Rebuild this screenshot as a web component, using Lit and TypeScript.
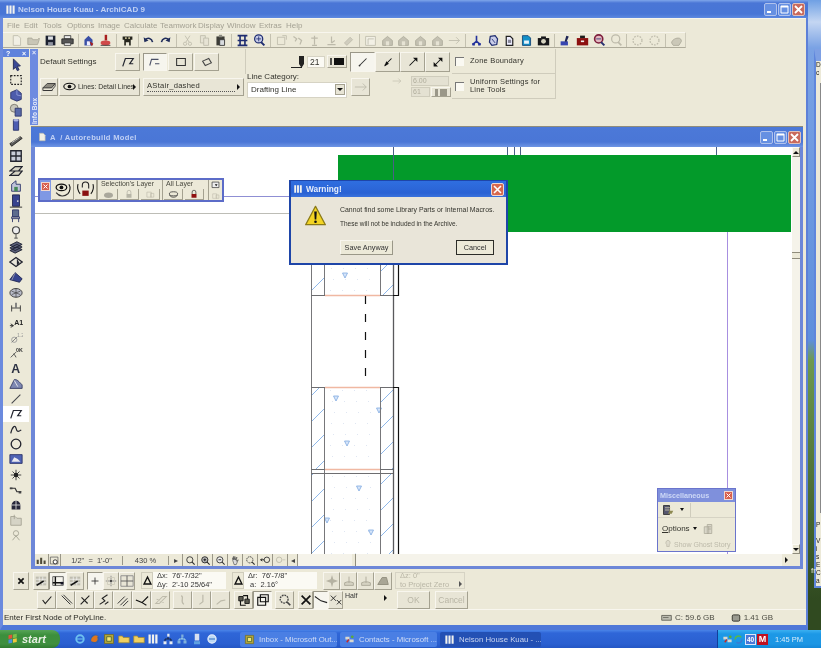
/**
 * ArchiCAD 9 main window on an XP desktop, with a warning dialog on top
 */

import { LitElement, css, html, svg } from "lit";
import { customElement } from "lit/decorators.js";

const DARK = "#23252f";
const BLUE = "#3a4fa6";
const RED = "#a81f1f";
const OFF = "#bdbaaa";

// Small line and shape icons, all on a 16x16 box
const ICONS: Record<string, unknown> = {
	page: svg`<path d="M4 2h6l3 3v9H4z" fill="#f1efe4" stroke="${OFF}"/>`,
	folder: svg`<path d="M1 13V5h5l1 2h6l2-2v2l-2 6z" fill="#c9c6b6" stroke="#a9a696"/>`,
	save: svg`<path d="M2 2h12v12H2z" fill="#1d2230"/><path d="M5 3h6v4H5z" fill="#dfe2e6"/><path d="M5 10h6v4H5z" fill="#8f93a0"/>`,
	print: svg`<path d="M4 2h8v4H4z" fill="#eee" stroke="#333"/><path d="M1 6h14v6H1z" fill="#555" stroke="#222"/><path d="M4 11h8v3H4z" fill="#eee" stroke="#333"/>`,
	doc: svg`<path d="M3 14V7l5-5 5 5v7z" fill="${BLUE}"/><path d="M6 9h4v5H6z" fill="#eef"/><path d="M9 9l5 3-2 3z" fill="${RED}"/>`,
	stamp: svg`<path d="M7 1h3v7H7z" fill="${RED}"/><ellipse cx="8" cy="11" rx="6" ry="3" fill="#d04a4a"/><path d="M2 14h12" stroke="#333"/>`,
	figure: svg`<path d="M2 3h12v4h-2v7h-2v-4H6v4H4V7H2z" fill="#26261e"/><path d="M5 4h2v2H5zM9 4h2v2H9z" fill="#c9c29a"/>`,
	undo: svg`<path d="M4 7c3-3 8-2 9 3" fill="none" stroke="#1f2c5a" stroke-width="2"/><path d="M2 4l1 6 5-2z" fill="#1f2c5a"/>`,
	redo: svg`<path d="M12 7C9 4 4 5 3 10" fill="none" stroke="#1f2c5a" stroke-width="2"/><path d="M14 4l-1 6-5-2z" fill="#1f2c5a"/>`,
	cut: svg`<path d="M5 2l5 8M11 2l-5 8" stroke="${OFF}" fill="none"/><circle cx="5" cy="12" r="2" fill="none" stroke="${OFF}"/><circle cx="11" cy="12" r="2" fill="none" stroke="${OFF}"/>`,
	copy: svg`<path d="M3 2h6v9H3z" fill="#e6e3d4" stroke="${OFF}"/><path d="M7 5h6v9H7z" fill="#e6e3d4" stroke="${OFF}"/>`,
	paste: svg`<path d="M3 3h10v11H3z" fill="#3c3c36"/><path d="M6 1h4v3H6z" fill="#8a8a80"/><path d="M7 7h6v7H7z" fill="#d9dcdf" stroke="#333"/>`,
	gridh: svg`<path d="M2 2h12M2 14h12M5 2v12M11 2v12M2 8h12" stroke="#1e2c70" stroke-width="2" fill="none"/>`,
	search: svg`<circle cx="7" cy="6" r="5" fill="#c7cce8" stroke="#1e2c70" stroke-width="1.5"/><path d="M4 6h6M7 3v6" stroke="#1e2c70"/><path d="M10 10l4 4" stroke="#1e2c70" stroke-width="2.5"/>`,
	off1: svg`<path d="M3 4h9v9H3z" fill="none" stroke="${OFF}"/><path d="M9 2h5v5" fill="none" stroke="${OFF}"/>`,
	off2: svg`<path d="M3 3l4 3-2 3M9 5l4 3-2 5" fill="none" stroke="${OFF}" stroke-width="1.5"/>`,
	off3: svg`<path d="M8 2v11M4 5h8M5 14h6" fill="none" stroke="${OFF}" stroke-width="1.5"/>`,
	off4: svg`<path d="M8 3v8M3 13h10M8 11l4-3" fill="none" stroke="${OFF}" stroke-width="1.5"/>`,
	off5: svg`<path d="M3 11l7-7 3 3-7 7z" fill="#d0cdbe" stroke="${OFF}"/>`,
	off6: svg`<path d="M2 3h12v11H2z" fill="#f2f0e5" stroke="${OFF}"/><path d="M5 6h7M5 6v7" stroke="${OFF}" fill="none"/>`,
	house: svg`<path d="M2 8l6-5 6 5v6H2z" fill="#c4c1b2" stroke="#aaa797"/><path d="M6 9h4v5H6z" fill="#e6e3d4"/>`,
	jack: svg`<path d="M8 2v9M3 13l5-4 5 4" stroke="#24339c" stroke-width="2" fill="none"/><path d="M3 11h3v3H3zM10 11h3v3h-3z" fill="#24339c"/>`,
	cube1: svg`<path d="M4 3l6-1 3 4-1 7-6 1-3-4z" fill="#c9cde8" stroke="#1e2c70" stroke-width="1.5"/><path d="M6 6l4 5" stroke="#1e2c70"/>`,
	cube2: svg`<path d="M4 3h5l3 3v8H4z" fill="#eef" stroke="#222" stroke-width="1.5"/><path d="M6 7h4v4H6z" fill="#889"/>`,
	cube3: svg`<path d="M3 2h7l3 3v9H3z" fill="#1490c8" stroke="#0d3d70"/><path d="M5 8h6v4H5z" fill="#e8f4fa"/>`,
	camera: svg`<path d="M1 5h14v9H1z" fill="#17171a"/><path d="M5 3h6v2H5z" fill="#17171a"/><circle cx="8" cy="9" r="3" fill="#d6d3c0"/>`,
	cad: svg`<path d="M2 9h9v5H2z" fill="#3846b0"/><path d="M9 2l3 1-3 7-2-1z" fill="#1d2454"/>`,
	redbox: svg`<path d="M1 5h14v9H1z" fill="#8c1010"/><path d="M5 2h6v3H5z" fill="#1d1d1d"/><path d="M6 8h4v2H6z" fill="#eee"/>`,
	lens: svg`<circle cx="7" cy="6" r="5" fill="#e3b8c0" stroke="#7d1e3c" stroke-width="2"/><path d="M4 6h6" stroke="#283070"/><path d="M10 10l4 4" stroke="#283070" stroke-width="2.5"/>`,
	lensoff: svg`<circle cx="7" cy="6" r="5" fill="none" stroke="${OFF}" stroke-width="1.5"/><path d="M10 10l4 4" stroke="${OFF}" stroke-width="2"/>`,
	dots: svg`<circle cx="8" cy="8" r="5.5" fill="none" stroke="${OFF}" stroke-dasharray="2 1.5" stroke-width="1.5"/>`,
	cloud: svg`<path d="M2 11c0-3 4-6 8-6 3 0 4 2 4 4l-3 5H4z" fill="#cbc8b8" stroke="#aaa797"/>`,
	polyline: svg`<path d="M2 13L5 4h9L10 10h4" fill="none" stroke="${DARK}" stroke-width="1.4"/>`,
	poly2: svg`<path d="M2 12l2-7h8M8 10h5" fill="none" stroke="#4a4f66" stroke-width="1.2"/>`,
	rect: svg`<path d="M3 4h10v8H3z" fill="none" stroke="#333" stroke-width="1.2"/>`,
	rot: svg`<path d="M3 7l7-3 3 5-7 3z" fill="none" stroke="#444" stroke-width="1.2"/>`,
	stack: svg`<path d="M1 9l5-5h9l-4 5z" fill="#8d8a80" stroke="#333"/><path d="M1 9v3h10l4-5V4" fill="none" stroke="#333"/><path d="M2 12h10" stroke="#333"/>`,
	eye: svg`<ellipse cx="8" cy="8" rx="7" ry="4" fill="none" stroke="#111" stroke-width="1.4"/><circle cx="8" cy="8" r="2.3" fill="#111"/>`,
	line: svg`<path d="M4 12L12 4" stroke="#333" stroke-width="1.2"/><circle cx="4" cy="12" r="1" fill="#333"/>`,
	lineb: svg`<path d="M4 12L12 4" stroke="#111" stroke-width="1.2"/><path d="M6 7l3 3-5 3z" fill="#111"/>`,
	linec: svg`<path d="M4 12L12 4" stroke="#111" stroke-width="1.2"/><path d="M8 3h5v5z" fill="#111"/>`,
	lined: svg`<path d="M4 12L12 4" stroke="#111" stroke-width="1.2"/><path d="M8 3h5v5zM3 8v5h5z" fill="#111"/>`,
	arrowoff: svg`<path d="M1 8h13M10 4l4 4-4 4" fill="none" stroke="${OFF}"/>`,
	// toolbox
	pointer: svg`<path d="M5 1l8 8-3.500 .5 2 4-2 1-2-4L5 13z" fill="#3a4896" stroke="#1e2450"/>`,
	marquee: svg`<path d="M2 3h12v10H2z" fill="none" stroke="#222" stroke-dasharray="2 1.500" stroke-width="1.300"/>`,
	slab: svg`<path d="M2 5l7-3 5 4v7l-5 2-7-3z" fill="#4d5cac" stroke="#2a3268"/><path d="M9 2v6l5 1" stroke="#8e9ad8" fill="none"/>`,
	morph: svg`<circle cx="6" cy="6" r="4.500" fill="#c7c5ba" stroke="#77756a"/><path d="M7 6h7v9H7z" fill="#5869a8" stroke="#2a3268"/>`,
	column: svg`<path d="M5 2h6v12H5z" fill="#4c5cb2" stroke="#2a3268"/><ellipse cx="8" cy="2.500" rx="3" ry="1.500" fill="#aab2e0"/>`,
	beam: svg`<path d="M1 11L13 3l2 2L3 14z" fill="#5a5a58" stroke="#222"/><path d="M3 10l9-6" stroke="#ccc"/>`,
	window: svg`<path d="M2 2h12v12H2z" fill="#c8ccd8" stroke="#22242e" stroke-width="1.500"/><path d="M8 2v12M2 8h12" stroke="#22242e" stroke-width="1.500"/>`,
	stair: svg`<path d="M1 8l6-5h8l-4 5zM1 13l6-5h8l-4 5z" fill="#d7d4c4" stroke="#22242e" stroke-width="1.400"/>`,
	wallup: svg`<path d="M3 14V6l5-4v4h5v8z" fill="#c0c4d8" stroke="#2a3268"/><path d="M6 9h4v5H6z" fill="#485"/>`,
	door: svg`<path d="M4 1h8v13H4z" fill="#37438e" stroke="#20264e"/><path d="M1 15h14" stroke="#222"/><circle cx="10" cy="8" r="1" fill="#ddd"/>`,
	chair: svg`<path d="M4 1h7v8H4z" fill="#5d6c8e" stroke="#2a3268"/><path d="M3 9h9v2H3zM4 11v4M11 11v4" stroke="#2a3268" fill="none"/>`,
	lamp: svg`<circle cx="8" cy="6" r="4" fill="#eee" stroke="#444" stroke-width="1.400"/><path d="M8 10v5M6 15h4" stroke="#444"/>`,
	layers: svg`<path d="M1 6l8-4 6 3-8 4zM1 9l8-4 6 3-8 4zM1 12l8-4 6 3-8 4z" fill="#5a5f78" stroke="#1c1f30"/>`,
	slab2: svg`<path d="M1 8l7-5 7 5-7 5z" fill="#e8e6da" stroke="#22242e" stroke-width="1.400"/><path d="M9 4l3 5-3 3" fill="#22242e"/>`,
	roof: svg`<path d="M1 11L7 3l8 7-3 4z" fill="#36448e" stroke="#1e2450"/><path d="M7 3L3 12" stroke="#99a"/>`,
	mesh: svg`<ellipse cx="8" cy="9" rx="7" ry="5" fill="#b9bcc8" stroke="#333"/><path d="M3 7l10 4M3 11l10-4M8 4v10" stroke="#333" stroke-width=".7"/>`,
	dim: svg`<path d="M3 8h10M3 5v7M13 5v7" stroke="#333" fill="none"/><path d="M7 2h2v6H7z" fill="#777"/>`,
	dimtext: svg`<path d="M1 11h4M2 9l3 2-3 2" stroke="#222" fill="none"/><text x="6" y="10" font-size="8" font-weight="700" font-family="Liberation Sans" fill="#222">A1</text>`,
	level: svg`<circle cx="6" cy="10" r="3" fill="none" stroke="#999"/><path d="M3 13l6-6" stroke="#777"/><text x="9" y="7" font-size="6" font-family="Liberation Sans" fill="#999">1.2</text>`,
	angle: svg`<path d="M2 13l6-6M8 13a6 6 0 0 0-3-4" stroke="#444" fill="none"/><text x="8" y="7" font-size="6" font-weight="700" font-family="Liberation Sans" fill="#333">0K</text>`,
	bigA: svg`<text x="2.500" y="14" font-size="14" font-weight="700" font-family="Liberation Sans" fill="#2c3142">A</text>`,
	fill: svg`<path d="M1 13l5-10c3-1 6 3 9 6v4z" fill="#7e88b2" stroke="#333a62"/><path d="M6 4l4 7" stroke="#eee"/>`,
	slash: svg`<path d="M3 13L13 3" stroke="#45464c" stroke-width="1.200"/>`,
	spline: svg`<path d="M2 13c2-8 5-10 6-6s2 5 6 2" fill="none" stroke="#22242e" stroke-width="1.400"/>`,
	circle: svg`<circle cx="8" cy="8" r="5.500" fill="none" stroke="#22242e" stroke-width="1.500"/>`,
	pic: svg`<path d="M1 3h14v10H1z" fill="#4f63b4" stroke="#2a3268"/><path d="M3 11l3-5 4 2 3 3z" fill="#e9e9f0"/>`,
	sun: svg`<path d="M8 2v12M2 8h12M4 4l8 8M12 4l-8 8" stroke="#333"/><circle cx="8" cy="8" r="2.500" fill="#222"/>`,
	conn: svg`<path d="M1 6h6l2 4h5" fill="none" stroke="#333" stroke-width="1.400"/><path d="M1 5h3v2H1zM11 9h3v3h-3z" fill="#444"/>`,
	halfwall: svg`<path d="M3 8a5 5 0 0 1 10 0v5H3z" fill="#26263a"/><path d="M8 3v10M3 8h10" stroke="#ddd"/>`,
	box3: svg`<path d="M2 4h5l2 2h5v8H2z" fill="#d6d4c6" stroke="#a5a394"/><path d="M6 2v5" stroke="#a5a394"/>`,
	ghost: svg`<circle cx="8" cy="6" r="3" fill="none" stroke="#a5a394"/><path d="M4 14l4-5 4 5" fill="none" stroke="#a5a394"/>`,
	// coordinates and guides
	cross: svg`<path d="M5 5l6 6M11 5l-6 6" stroke="#111" stroke-width="2"/>`,
	grid2: svg`<path d="M2 3h12v10H2z" fill="#bfbdb0"/><path d="M2 6h12M2 10h12M6 3v10M10 3v10" stroke="#fff" stroke-width=".7"/><path d="M3 13l8-5" stroke="#111" stroke-width="1.800"/>`,
	grid3: svg`<path d="M2 3h12v10H2z" fill="none" stroke="#555"/><path d="M5 3v10M2 10h12" stroke="#111" stroke-width="1.600"/><path d="M11 9h3v3h-3z" fill="#112"/>`,
	plus: svg`<path d="M8 4v8M4 8h8" stroke="#333"/>`,
	plusgrid: svg`<path d="M8 2v12M2 8h12" stroke="#888"/><path d="M4 4h8v8H4z" fill="none" stroke="#cfccbc"/><circle cx="8" cy="8" r="1.200" fill="#333"/>`,
	plusbox: svg`<path d="M1 2h14v12H1z" fill="none" stroke="#888"/><path d="M8 2v12M1 8h14" stroke="#555"/>`,
	tri: svg`<path d="M8 3l5 10H3z" fill="none" stroke="#111" stroke-width="2"/>`,
	cursor1: svg`<path d="M3 8l3 4 7-8" fill="none" stroke="#222" stroke-width="1.300"/>`,
	cursor2: svg`<path d="M3 3l10 10M5 2l10 10" fill="none" stroke="#333" stroke-width="1.100"/>`,
	cursor3: svg`<path d="M3 13L13 3M4 5l7 7" fill="none" stroke="#222" stroke-width="1.300"/>`,
	cursor4: svg`<path d="M3 13l6-4-3-3 6-4M9 13l4-3" fill="none" stroke="#222" stroke-width="1.300"/>`,
	cursor5: svg`<path d="M2 12l8-8M5 14l8-8M8 15l6-6" fill="none" stroke="#333" stroke-width="1.100"/>`,
	cursor6: svg`<path d="M1 8l7 3 7-7M8 11l5 3" fill="none" stroke="#111" stroke-width="1.300"/>`,
	cursor7: svg`<path d="M2 12l8-8h4l-8 8zM3 7l8 4" fill="none" stroke="${OFF}" stroke-width="1.200"/>`,
	curve1: svg`<path d="M6 3c4 2-2 6 3 10" fill="none" stroke="${OFF}" stroke-width="1.400"/>`,
	curve2: svg`<path d="M9 2v8l-4 3" fill="none" stroke="${OFF}" stroke-width="1.400"/>`,
	curve3: svg`<path d="M3 13l5-4 5-1" fill="none" stroke="${OFF}" stroke-width="1.400"/>`,
	cogs: svg`<path d="M2 4h5v5H2zM9 7h5v5H9z" fill="#5a5a50" stroke="#111"/><path d="M4 9v5h6M7 3h5v4" fill="none" stroke="#111" stroke-width="1.300"/>`,
	planbox: svg`<path d="M2 5h9v9H2z" fill="none" stroke="#111" stroke-width="1.300"/><path d="M5 2h9v8H5z" fill="none" stroke="#111" stroke-width="1.300"/>`,
	lensg: svg`<circle cx="7" cy="7" r="4.500" fill="none" stroke="#444" stroke-dasharray="2 1" stroke-width="1.500"/><path d="M10 10l4 4" stroke="#444" stroke-width="2"/>`,
	bigx: svg`<path d="M3 3l10 10M13 3L3 13" stroke="#111" stroke-width="2"/>`,
	slope: svg`<path d="M1 4l7 5 7 2" fill="none" stroke="#222" stroke-width="1.200"/>`,
	xs: svg`<path d="M2 3l6 6M8 3L2 9M9 8l5 5M14 8l-5 5" stroke="#222"/>`,
	down1: svg`<path d="M8 3v7M3 13h10v-3l-3-1H6l-3 1z" fill="#d5d2c2" stroke="#aaa797"/>`,
	roof2: svg`<path d="M2 12l5-8h5l2 8z" fill="#a9a696" stroke="#8f8c7c"/>`,
	burst: svg`<path d="M8 1l1.500 5L15 8l-5.500 2L8 15l-1.500-5L1 8l5.500-2z" fill="#b5b2a2"/>`,
	// view bar
	trio: svg`<path d="M1 13V7h3v6zM6 13V4h3v9zM11 13V8h3v5z" fill="#4e4a38"/>`,
	mag: svg`<path d="M2 3h11v10H2z" fill="none" stroke="#555"/><circle cx="9" cy="10" r="3" fill="#fff" stroke="#111" stroke-width="1.200"/>`,
	zoomn: svg`<circle cx="7" cy="7" r="4.500" fill="none" stroke="#333" stroke-width="1.300"/><path d="M10 10l4 4" stroke="#333" stroke-width="1.800"/>`,
	zoomi: svg`<circle cx="7" cy="7" r="4.500" fill="#bbb" stroke="#222" stroke-width="1.300"/><path d="M5 7h4M7 5v4M10 10l4 4" stroke="#222" stroke-width="1.500"/>`,
	zoomo: svg`<circle cx="7" cy="7" r="4.500" fill="#eee" stroke="#333" stroke-width="1.300"/><path d="M5 7h4M10 10l4 4" stroke="#333" stroke-width="1.500"/>`,
	hand: svg`<path d="M4 8V4l1 3V2l2 5V2l1 5 2-4-1 6 3-2-3 7H6z" fill="#ddd" stroke="#333" stroke-width=".800"/>`,
	zoomr: svg`<circle cx="7" cy="7" r="4.500" fill="none" stroke="#333" stroke-dasharray="2 1" stroke-width="1.300"/><path d="M10 10l4 4" stroke="#333" stroke-width="1.800"/>`,
	back: svg`<circle cx="10" cy="7" r="4" fill="none" stroke="#333" stroke-width="1.300"/><path d="M1 7h5M3 5L1 7l2 2" stroke="#111" fill="none" stroke-width="1.300"/>`,
	nextoff: svg`<circle cx="6" cy="7" r="4" fill="none" stroke="${OFF}" stroke-width="1.300"/><path d="M11 7h4" stroke="${OFF}"/>`,
	// palette eyes and locks
	eyearrow: svg`<path d="M2 11c3 4 8 4 11 1" fill="none" stroke="#333"/><ellipse cx="7" cy="6" rx="5" ry="3" fill="none" stroke="#111" stroke-width="1.200"/><circle cx="7" cy="6" r="1.800" fill="#111"/><path d="M14 3c2 3 1 7-1 9" fill="none" stroke="#111"/>`,
	lockarrow: svg`<path d="M5 6V4a3 3 0 0 1 6 0v3" fill="none" stroke="#222"/><path d="M5 9h6v5H5z" fill="#8a1010"/><path d="M1 3c-1 3 0 7 2 9M15 3c1 3 0 7-2 9" fill="none" stroke="#111"/>`,
	dish: svg`<ellipse cx="8" cy="9" rx="6.500" ry="4" fill="#aaa89c"/>`,
	dishd: svg`<ellipse cx="8" cy="7" rx="6" ry="3" fill="none" stroke="#3a3a3a" stroke-width="1.200"/><path d="M2 9c3 4 9 4 12 0" fill="none" stroke="#222"/>`,
	lockg: svg`<path d="M5 8V5a3 3 0 0 1 6 0v3" fill="none" stroke="#aaa89c"/><path d="M4 8h8v6H4z" fill="#b7b5a7"/>`,
	lockr: svg`<path d="M5 8V5a3 3 0 0 1 6 0v3" fill="none" stroke="#222"/><path d="M4 8h8v6H4z" fill="#8f1010"/>`,
	boxd: svg`<path d="M3 5h7v8H3zM9 7h5v6H9z" fill="none" stroke="#bdbaaa"/>`,
	dropd: svg`<path d="M3 3h10v8H3z" fill="#eee" stroke="#333"/><path d="M7 6h4l-2 3z" fill="#111"/>`,
	misc: svg`<path d="M2 2h8v12H2z" fill="#55566e" stroke="#222"/><path d="M4 5h8M4 8h8" stroke="#ded8b4"/><path d="M10 9h5l-2 4h-5z" fill="#8e8a52"/>`,
	miscoff: svg`<path d="M3 5h6v9H3zM7 2h6v12H7z" fill="#d9d6c8" stroke="#aaa797"/><path d="M8 5h4M8 8h4" stroke="#aaa797"/>`,
	ghostb: svg`<path d="M8 2a4 4 0 0 0-2 7v3h4V9a4 4 0 0 0-2-7z" fill="#dedbcc" stroke="#b5b2a2"/>`,
	// taskbar
	ie: svg`<circle cx="8" cy="8" r="5" fill="none" stroke="#6cc0f0" stroke-width="2.500"/><path d="M3 8h10" stroke="#6cc0f0" stroke-width="1.500"/>`,
	fox: svg`<circle cx="8" cy="8" r="6" fill="#2f5fb0"/><path d="M3 11c-1-6 6-10 10-6-2-1-2 0-2 1 2 4-2 8-8 5z" fill="#e0761c"/>`,
	outlook: svg`<path d="M2 2h12v12H2z" fill="#b3a53a" stroke="#736c20"/><path d="M5 5h6v6H5z" fill="#f5e87a" stroke="#3b5a2a"/>`,
	yfolder: svg`<path d="M1 13V4h5l1 2h8v7z" fill="#f0d060" stroke="#a08a30"/>`,
	bars: svg`<path d="M2 2h3v12H2zM6.500 2h3v12h-3zM11 2h3v12h-3z" fill="#f2f2ee"/>`,
	net: svg`<path d="M7 1h3v4H7zM2 11h4v4H2zM10 11h4v4h-4z" fill="#e8ecf2"/><path d="M8 5v3M4 11V8h8v3" stroke="#111" fill="none"/>`,
	net2: svg`<path d="M7 2h3v4H7zM2 10h4v4H2zM10 10h4v4h-4z" fill="#7fb0dc"/><path d="M8 6v2M4 10V8h8v2" stroke="#cfe" fill="none"/>`,
	msn: svg`<path d="M5 1h6v9H5z" fill="#d8e0f0"/><path d="M4 11h8v4H4z" fill="#5fa0e0"/>`,
	ie2: svg`<circle cx="8" cy="8" r="5.500" fill="#bcd8f4" stroke="#e8f0fc" stroke-width="1.500"/><path d="M4 8h8" stroke="#3c78c8" stroke-width="1.500"/>`,
	sat: svg`<path d="M2 4h6v4H2zM8 8h6v4H8z" fill="#d8d8d0"/><path d="M4 12l3-4" stroke="#c62828" stroke-width="2"/><circle cx="12" cy="4" r="2" fill="#5caa38"/>`,
	sync: svg`<path d="M3 8a5 5 0 0 1 9-3" fill="none" stroke="#58b848" stroke-width="2"/><path d="M13 8a5 5 0 0 1-8 4" fill="none" stroke="#3e78d0" stroke-width="2"/>`,
	disk: svg`<path d="M1 5h14v7H1z" fill="#bcbcb0" stroke="#44443c"/><path d="M3 8h8" stroke="#55554c"/>`,
	chip: svg`<path d="M4 3h8a2 2 0 0 1 2 2v6a2 2 0 0 1-2 2H4a2 2 0 0 1-2-2V5a2 2 0 0 1 2-2z" fill="#9a9a90" stroke="#33332c" stroke-width="1.500"/>`,
	flag: svg`<path d="M2 3l5-1v5l-5 1z" fill="#e2563a"/><path d="M8 2l5-1v5l-5 1z" fill="#7cc04a"/><path d="M2 9l5-1v5l-5 1z" fill="#4a90e0"/><path d="M8 8l5-1v5l-5 1z" fill="#f0c83a"/>`,
	warn: svg`<path d="M8 1L15.500 15H.5z" fill="#f3d424" stroke="#8a7a18" stroke-linejoin="round"/><path d="M7 5h2l-.4 6H7.400z" fill="#111"/><circle cx="8" cy="12.800" r="1" fill="#111"/>`,
};

const icon = (name: string, size = 14) =>
	html`<svg class="ic" width=${size} height=${size} viewBox="0 0 16 16">${ICONS[name]}</svg>`;

const MENUS: [string, number][] = [
	["File", 17], ["Edit", 19], ["Tools", 24], ["Options", 31], ["Image", 26], ["Calculate", 36],
	["Teamwork", 38], ["Display", 29], ["Window", 32], ["Extras", 27], ["Help", 20],
];

// "|" marks a toolbar separator
const TOOLS = "page folder save print | doc stamp | figure | undo redo | cut copy paste | gridh search | off1 off2 off3 off4 off5 | off6 house house house house arrowoff | jack cube1 cube2 cube3 camera | cad redbox lens lensoff | dots dots | cloud".split(" ");

const TOOLBOX = "pointer marquee slab morph column beam window stair wallup door chair lamp layers slab2 roof mesh dim dimtext level angle bigA fill slash polyline spline circle pic sun conn halfwall box3 ghost".split(" ");

const VIEW_ICONS = "zoomi zoomo hand zoomr back nextoff".split(" ");

const ROW2A = "cursor1 cursor2 cursor3 cursor4 cursor5 cursor6".split(" ");

const QUICK = "ie fox outlook yfolder yfolder bars net net2 msn ie2".split(" ");

const TRIANGLES: [number, number][] = [[345, 275], [336, 398], [379, 410], [347, 443], [359, 488], [327, 520], [371, 532]];

@customElement("win-buttons")
export class WinButtons extends LitElement {
	static styles = css`
		:host { display: flex; gap: 1px; }
		.b {
			width: 13px;
			height: 13px;
			border-radius: 2px;
			border: 1px solid #b0c2ec;
			background: #6690e2;
			box-sizing: border-box;
			display: flex;
			align-items: center;
			justify-content: center;
		}
		.close { background: #c96a5c; border-color: #e0c0ba; }
		svg { display: block; }
	`;
	render() {
		return html`
			<div class="b"><svg width="9" height="9" viewBox="0 0 9 9"><path d="M1 6h4v2H1z" fill="#fff"/></svg></div>
			<div class="b"><svg width="9" height="9" viewBox="0 0 9 9"><path d="M1 1h7v7H1z" fill="none" stroke="#fff"/><path d="M1 1h7v1.500H1z" fill="#fff"/></svg></div>
			<div class="b close"><svg width="9" height="9" viewBox="0 0 9 9"><path d="M1 1l7 7M8 1L1 8" stroke="#fff" stroke-width="1.800"/></svg></div>
		`;
	}
}

@customElement("app-root")
export class AppRoot extends LitElement {
	static styles = css`
		:host {
			display: block;
			position: relative;
			width: 821px;
			height: 648px;
			overflow: hidden;
			font-family: "Liberation Sans", Arial, sans-serif;
			font-size: 8px;
			color: #33332c;
			background: linear-gradient(#6fa0e4 0, #c4d6f2 22px, #7aa2e4 48px, #5f8fdc 340px, #6f9a4e 360px, #304a20 600px);
			filter: blur(0.45px);
		}
		svg { display: block; flex: none; }
		.ic { display: block; }

		/* hidden window peeking out behind the main one */
		.behind {
			position: absolute;
			left: 814px;
			top: 49px;
			width: 60px;
			height: 539px;
			background: #ece9d8;
			border: 2px solid #5f86dc;
			border-top: 12px solid #7ea0e4;
			box-sizing: border-box;
			font-size: 6.500px;
			line-height: 8px;
			color: #222;
		}
		.behind div { height: 8px; }
		.behind .well { height: 430px; margin: 6px 0 8px 4px; border-left: 1px solid #888; background: #f4f2e8; }
		.peek { position: absolute; left: 811px; top: 566px; color: #e8e8e0; font-size: 8px; }

		.main {
			position: absolute;
			left: 0;
			top: 0;
			width: 808px;
			height: 630px;
			box-sizing: border-box;
			background: #ece9d8;
			border-left: 3px solid #6b8ade;
			border-right: 2px solid #5d80d8;
			border-bottom: 5px solid #4f78d8;
			display: flex;
			flex-direction: column;
		}
		.title {
			height: 18px;
			margin: 0 -2px 0 -3px;
			padding: 0 3px 0 5px;
			flex: none;
			display: flex;
			align-items: center;
			gap: 2px;
			background: linear-gradient(#7fa6ea 0, #4a76d6 3px, #4775d6 14px, #5d89e0 18px);
			color: #c0d0f4;
			font-size: 8px;
			font-weight: 700;
		}
		.title .grow { flex: 1; }
		.menu {
			height: 13px;
			flex: none;
			padding-left: 3px;
			display: flex;
			align-items: center;
			color: #a5a294;
			font-size: 8px;
			border-top: 1px solid #f6f4ea;
		}
		.menu span { flex: none; box-sizing: border-box; padding-left: 1px; }
		.tools {
			height: 16px;
			width: 683px;
			box-sizing: border-box;
			flex: none;
			padding-left: 5px;
			display: flex;
			align-items: center;
			border-bottom: 1px solid #aeab9a;
			border-top: 1px solid #f8f6ee;
			border-right: 1px solid #cfccbc;
		}
		.tools .t { width: 16.900px; display: flex; justify-content: center; flex: none; }
		.tools .sep { width: 4.700px; flex: none; height: 13px; background: linear-gradient(90deg, transparent 2px, #c4c1b0 2px, #c4c1b0 3px, transparent 3px); }

		.body { flex: 1; display: flex; min-height: 0; }
		.toolbox { width: 26px; flex: none; display: flex; flex-direction: column; padding-top: 1px; }
		.tb-head {
			height: 8px;
			background: #5f82dc;
			color: #fff;
			font-size: 7px;
			font-weight: 700;
			display: flex;
			justify-content: space-between;
			padding: 0 3px;
			align-items: center;
			flex: none;
		}
		.tb-list { flex: none; }
		.tb-item { height: 15.200px; display: flex; align-items: center; justify-content: center; }
		.tb-item.on { background: #fff; }

		.right { flex: 1; display: flex; flex-direction: column; min-width: 0; padding-left: 1px; }
		.info { height: 77px; flex: none; display: flex; padding-top: 1px; box-sizing: border-box; }
		.strip {
			width: 8px;
			flex: none;
			background: #6d8be0;
			color: #e4eafb;
			display: flex;
			flex-direction: column;
			align-items: center;
			justify-content: space-between;
			font-weight: 700;
			font-size: 7px;
		}
		.strip .v { writing-mode: vertical-rl; transform: rotate(180deg); font-size: 6.500px; white-space: nowrap; padding-top: 1px; }
		.rows { flex: 1; min-width: 0; }
		.row { display: flex; align-items: center; height: 25px; }
		.sp { flex: none; }
		.lab { flex: none; font-size: 8px; white-space: nowrap; }
		.btn {
			flex: none;
			box-sizing: border-box;
			display: flex;
			align-items: center;
			justify-content: center;
			border-right: 1px solid #a4a190;
			border-bottom: 1px solid #a4a190;
			border-top: 1px solid #f8f6ee;
			border-left: 1px solid #f8f6ee;
			background: #e8e5d6;
		}
		.btn.on { background: #f6f5ee; border-color: #9a9788 #f8f6ee #f8f6ee #9a9788; }
		.num { flex: none; box-sizing: border-box; background: #fbfaf4; border: 1px solid #d6d3c4; font-size: 8.500px; padding-left: 2px; line-height: 10px; height: 12px; }
		.lines-btn { gap: 2px; justify-content: flex-start; padding-left: 3px; font-size: 7.600px; position: relative; white-space: nowrap; }
		.lines-btn .small { font-size: 6.900px; }
		.tip { position: absolute; right: 3px; top: 5px; width: 0; height: 0; border-left: 3px solid #111; border-top: 3px solid transparent; border-bottom: 3px solid transparent; }
		.dash { position: absolute; left: 3px; right: 8px; bottom: 3px; border-bottom: 1px dotted #555; }
		.cat { flex: none; display: flex; flex-direction: column; gap: 1px; font-size: 8px; }
		.select { height: 14px; background: #fff; display: flex; align-items: center; justify-content: space-between; padding: 0 1px 0 3px; border: 1px solid #d6d3c4; }
		.drop { width: 10px; height: 11px; background: #e8e5d6; border: 1px solid #a4a190; box-sizing: border-box; display: flex; align-items: center; justify-content: center; }
		.drop::after { content: ""; border-top: 3px solid #111; border-left: 3px solid transparent; border-right: 3px solid transparent; }
		.check { width: 9px; height: 9px; flex: none; box-sizing: border-box; background: #faf9f2; border-left: 1px solid #777; border-top: 1px solid #777; }
		.boxed { flex: none; width: 104px; height: 100%; box-sizing: border-box; border-right: 1px solid #cfccbc; border-bottom: 1px solid #cfccbc; display: flex; align-items: center; gap: 3px; padding-left: 3px; font-size: 7.500px; line-height: 8.500px; letter-spacing: 0.2px; }
		.divider { width: 1px; height: 100%; background: #cfccbc; flex: none; }
		.off-block { flex: none; display: flex; flex-direction: column; gap: 1px; color: #b0ad9c; }
		.off-row { display: flex; align-items: center; gap: 1px; }
		.off-num { width: 38px; height: 10px; box-sizing: border-box; background: #e4e1d2; border: 1px solid #cfccbc; font-size: 7px; line-height: 8px; padding-left: 1px; }

		.doc {
			flex: 1;
			margin: 2px 3px 1px 1px;
			min-height: 0;
			display: flex;
			flex-direction: column;
			border: 4px solid #6d87d8;
			border-top: 0;
			border-bottom-width: 3px;
			border-right-width: 3px;
			box-shadow: 0 -1px 0 #8f8c7c;
		}
		.doc-title {
			height: 20px;
			margin: 0 -3px 0 -4px;
			padding: 0 2px 0 6px;
			flex: none;
			display: flex;
			align-items: center;
			gap: 3px;
			background: linear-gradient(#4c79d8, #4a76d6 15px, #6f95e4);
			color: #c0d0f4;
			font-size: 7.600px;
			font-weight: 700;
			letter-spacing: 0.3px;
		}
		.doc-title .grow { flex: 1; }
		.doc-main { flex: 1; display: flex; min-height: 0; }
		.canvas { flex: none; background: #fff; }
		.vbar { flex: 1; background: #f5f3ea; display: flex; flex-direction: column; position: relative; }
		.arrow { height: 10px; display: flex; align-items: center; justify-content: center; border: 1px solid; border-color: #fbfaf4 #8f8c7c #8f8c7c #fbfaf4; background: #ece9d8; flex: none; box-sizing: border-box; }
		.arrow::after { content: ""; border-left: 3px solid transparent; border-right: 3px solid transparent; }
		.arrow.up::after { border-bottom: 3px solid #111; }
		.arrow.dn::after { border-top: 3px solid #111; }
		.thumb { height: 5px; margin-top: 95px; border-top: 1px solid #8f8c7c; border-bottom: 1px solid #8f8c7c; background: #ece9d8; flex: none; }
		.vfill { flex: 1; }
		.viewbar { height: 12px; flex: none; display: flex; align-items: center; background: #ece9d8; font-size: 7.500px; color: #444; }
		.viewbar .cell { flex: none; display: flex; align-items: center; justify-content: center; height: 100%; border-right: 1px solid #9a9788; box-sizing: border-box; }
		.viewbar .txt { flex: none; text-align: center; box-sizing: border-box; }
		.hbar { flex: 1; height: 100%; background: #f5f3ea; position: relative; display: flex; justify-content: flex-end; }
		.hthumb { position: absolute; left: 54px; top: 0; width: 3px; height: 100%; background: #ece9d8; border-right: 1px solid #8f8c7c; }
		.grip { width: 18px; height: 100%; background: #ece9d8; display: flex; align-items: center; flex: none; }
		.grip::before { content: ""; border-left: 3px solid #111; border-top: 3px solid transparent; border-bottom: 3px solid transparent; margin-left: 3px; }

		.coords { flex: none; height: 39px; padding-top: 1px; box-sizing: border-box; }
		.crow { display: flex; align-items: center; height: 19px; }
		.field { flex: none; background: #fbfaf4; height: 17px; display: flex; flex-direction: column; justify-content: center; font-size: 7.500px; line-height: 8.500px; padding-left: 4px; box-sizing: border-box; color: #333; }
		.field.off { background: #ece9d8; color: #b9b6a6; position: relative; border: 1px solid #d6d3c4; }
		.smallb { flex: none; height: 17px; width: 12px; box-sizing: border-box; border: 1px solid #cfccbc; display: flex; align-items: center; justify-content: center; }
		.text-off { color: #b9b6a6; font-size: 8.500px; }
		.half { flex: none; width: 45px; height: 17px; box-sizing: border-box; font-size: 7px; line-height: 8px; position: relative; padding-top: 1px; color: #333; }
		.half .tip { right: 3px; top: 4px; }

		.status {
			flex: none;
			height: 15px;
			display: flex;
			align-items: center;
			border-top: 1px solid #f8f6ee;
			font-size: 8px;
			color: #2c2c26;
			padding-left: 1px;
		}
		.status .fill { flex: 1; }
		.status .m { display: flex; align-items: center; gap: 3px; color: #4b4b42; font-size: 8px; }

		.taskbar {
			position: absolute;
			left: 0;
			right: 0;
			bottom: 0;
			height: 18px;
			display: flex;
			align-items: center;
			background: linear-gradient(#4a84e8 0, #2f66d8 3px, #2a5fd0 14px, #2456c4);
			color: #d0dcf6;
			font-size: 8px;
		}
		.start {
			flex: none;
			width: 60px;
			height: 100%;
			box-sizing: border-box;
			padding-left: 7px;
			display: flex;
			align-items: center;
			gap: 3px;
			background: linear-gradient(#57a457, #3c8f3c 5px, #3f8f3f 14px, #2f7a2f);
			border-radius: 0 8px 8px 0;
			color: #e8f0e4;
			font-style: italic;
			font-weight: 700;
			font-size: 11px;
		}
		.quick { flex: none; width: 180px; display: flex; padding-left: 13px; box-sizing: border-box; }
		.quick .q { width: 14.600px; display: flex; justify-content: center; flex: none; }
		.task {
			flex: none;
			height: 15px;
			width: 97px;
			margin-right: 3px;
			box-sizing: border-box;
			display: flex;
			align-items: center;
			gap: 4px;
			padding-left: 4px;
			border-radius: 2px;
			background: #4a7fe4;
			font-size: 7.800px;
			white-space: nowrap;
			overflow: hidden;
		}
		.task.on { background: #2350b4; width: 101px; color: #c8d4f0; }
		.tray {
			margin-left: auto;
			flex: none;
			width: 104px;
			height: 100%;
			box-sizing: border-box;
			padding-left: 4px;
			display: flex;
			align-items: center;
			background: linear-gradient(#3bb0f0, #1c98e6 4px, #1c96e4 14px, #1488d8);
			border-left: 1px solid #123f9a;
			font-size: 7.500px;
			color: #d8ecfa;
		}
		.ti40 { width: 11px; height: 11px; background: #4a78d8; border: 1px solid #dce6f8; box-sizing: border-box; font-size: 6.500px; font-weight: 700; color: #fff; text-align: center; line-height: 9px; margin-left: 1px; }
		.tim { width: 11px; height: 11px; background: #c01020; color: #fff; font-size: 9px; font-weight: 700; text-align: center; line-height: 11px; margin: 0 7px 0 1px; }

		/* floating palettes */
		.layers {
			position: absolute;
			left: 38px;
			top: 178px;
			width: 186px;
			height: 24px;
			box-sizing: border-box;
			border: 2px solid #5c6cc8;
			background: #ece9d8;
			display: flex;
			align-items: stretch;
		}
		.l-close { width: 11px; flex: none; background: #7f98e4; display: flex; align-items: flex-start; justify-content: center; padding-top: 2px; }
		.redx { width: 7px; height: 7px; background: #d8604e; border: 1px solid #f0d8d0; display: flex; align-items: center; justify-content: center; flex: none; }
		.l-big { width: 22px; flex: none; display: flex; align-items: center; justify-content: center; border-right: 1px solid #a4a190; border-bottom: 1px solid #a4a190; box-sizing: border-box; margin-left: 1px; }
		.l-group { flex: none; display: flex; flex-direction: column; font-size: 7px; color: #4a4a40; border-left: 1px solid #a4a190; padding-left: 1px; line-height: 8px; white-space: nowrap; }
		.l-group.sel { width: 63px; }
		.l-group.all { width: 44px; }
		.l-cells { display: flex; gap: 2px; margin-top: 1px; }
		.l-cell { width: 19px; height: 11px; display: flex; justify-content: center; align-items: center; border-right: 1px solid #a4a190; border-bottom: 1px solid #a4a190; box-sizing: border-box; }
		.l-side { flex: none; width: 12px; border-left: 1px solid #a4a190; display: flex; flex-direction: column; align-items: center; }

		.misc {
			position: absolute;
			left: 657px;
			top: 488px;
			width: 79px;
			height: 64px;
			box-sizing: border-box;
			border: 1.500px solid #6a74cc;
			background: #ece9d8;
			display: flex;
			flex-direction: column;
		}
		.m-title { height: 13px; flex: none; background: #7f90dc; color: #cdd8f6; font-weight: 700; font-size: 7.200px; display: flex; justify-content: space-between; align-items: center; padding: 0 2px; }
		.m-row1 { height: 15px; flex: none; display: flex; align-items: center; gap: 5px; padding-left: 4px; border-bottom: 1px solid #d6d3c4; }
		.m-line { width: 1px; height: 14px; background: #cfccbc; margin-left: 1px; }
		.caret { border-top: 3px solid #111; border-left: 2.500px solid transparent; border-right: 2.500px solid transparent; flex: none; }
		.m-row2 { height: 21px; flex: none; display: flex; align-items: center; gap: 3px; padding-left: 4px; font-size: 8px; }
		.m-row2 u { text-decoration-thickness: 0.5px; }
		.m-row3 { display: flex; align-items: center; gap: 1px; padding-left: 5px; color: #bcb9a9; font-size: 7px; white-space: nowrap; }

		.dialog {
			position: absolute;
			left: 289px;
			top: 180px;
			width: 219px;
			height: 85px;
			box-sizing: border-box;
			background: #e9e5d9;
			border: 2px solid #1e45a8;
			border-top-width: 1px;
			display: flex;
			flex-direction: column;
		}
		.d-title {
			height: 16px;
			flex: none;
			background: linear-gradient(#2f6ee0, #2a62d4 12px, #3a72dc);
			color: #e6eefc;
			font-size: 8.300px;
			font-weight: 700;
			display: flex;
			align-items: center;
			padding: 0 2px;
			gap: 3px;
		}
		.d-title .grow { flex: 1; }
		.d-close { width: 13px; height: 13px; border-radius: 2px; background: #d8684e; border: 1px solid #f0d8d0; box-sizing: border-box; display: flex; align-items: center; justify-content: center; }
		.d-body { flex: 1; display: flex; padding: 8px 0 0 14px; }
		.d-icon { width: 21px; flex: none; }
		.d-text { margin-left: 14px; flex: 1; color: #33332c; }
		.d-l1 { font-size: 6.900px; line-height: 10px; white-space: nowrap; }
		.d-l2 { font-size: 6.500px; line-height: 10px; margin-top: 4px; white-space: nowrap; }
		.d-btns { display: flex; justify-content: space-between; margin-top: 11px; width: 154px; }
		.d-btn { height: 15px; box-sizing: border-box; font-size: 7.300px; color: #333; display: flex; align-items: center; justify-content: center; background: #ece9d8; border: 1px solid; border-color: #f8f6ee #9a9788 #9a9788 #f8f6ee; }
		.d-btn.save { width: 53px; }
		.d-btn.cancel { width: 38px; border: 1.500px solid #2c2c28; }
	`;

	private drawing() {
		const hatch = (x: number, y0: number, y1: number, phase: number) => {
			const out = [];
			for (let y = y0 + phase; y < y1 + 13; y += 26) {
				const top = Math.max(y - 13, y0);
				const bottom = Math.min(y, y1);
				const fromX = x + (y - bottom);
				const toX = x + (y - top);
				out.push(svg`<line x1=${fromX} y1=${bottom} x2=${toX} y2=${top} stroke="#8fb8ea"/>`);
			}
			return out;
		};
		const specks = [];
		for (const [y0, y1] of [[268, 294], [390, 467], [476, 555]]) {
			for (let y = y0; y < y1; y += 11) {
				for (let x = 330 + ((y * 7) % 5); x < 378; x += 12) {
					specks.push(svg`<rect x=${x} y=${y} width="1" height="1" fill="#dfe6f2"/>`);
				}
			}
		}
		const tri = TRIANGLES.map(
			([x, y]) => svg`<path d="M${x - 2.5} ${y - 2}h5l-2.500 5z" fill="#d7e6fa" stroke="#7fa8e0" stroke-width=".8"/>`,
		);
		return svg`
			<rect x="338" y="155" width="453" height="77" fill="#039a2a"/>
			<path d="M393.500 147v33M507.500 147v8M514.500 147v8M520.500 147v8M716.500 147v8" stroke="#4a5f86"/>
			<path d="M35 196.500h303" stroke="#8f8fd4"/>
			<path d="M35 213.500h255" stroke="#bdbdb6"/>
			<path d="M727.500 232v324" stroke="#a78fe0"/>
			${specks}
			${hatch(311, 265, 295, 0)}${hatch(381, 265, 295, 6)}
			${hatch(311, 388, 469, 8)}${hatch(381, 388, 469, 14)}
			${hatch(311, 474, 556, 2)}${hatch(381, 474, 556, 10)}
			${tri}
			<path d="M311.500 265v291M324.500 265v30M324.500 387v169M380.500 265v30M380.500 387v169" stroke="#77777a"/>
			<path d="M311 295.500h82M311 387.500h82M311 469.500h82M311 473.500h82" stroke="#6d6d70"/>
			<path d="M325 295.500h55M325 387.500h55M325 469.500h55" stroke="#f0b8a2" stroke-width="1.300"/>
			<path d="M393.500 265v291" stroke="#59595c" stroke-width="1.300"/>
			<path d="M393 295.500h5.500V265M398.500 556V387.500H393" fill="none" stroke="#111" stroke-width="1.200"/>
			<path d="M365.500 296v84" stroke="#111" stroke-width="1.200" stroke-dasharray="8 10"/>
		`;
	}

	private infoBox() {
		const sp = (w: number) => html`<div class="sp" style="width:${w}px"></div>`;
		const btn = (w: number, name: string, on = false, h = 18) =>
			html`<div class="btn ${on ? "on" : ""}" style="width:${w}px;height:${h}px">${icon(name)}</div>`;
		return html`
			<div class="info">
				<div class="strip"><span>×</span><span class="v">Info Box</span></div>
				<div class="rows">
					<div class="row">
						${sp(2)}<div class="lab" style="width:75px">Default Settings</div>
						${btn(25, "polyline")}${sp(3)}${btn(24, "poly2", true)}${sp(1)}${btn(25, "rect")}${sp(1)}${btn(25, "rot")}
						${sp(26)}<div class="divider"></div>${sp(44)}
						<svg width="15" height="14" viewBox="0 0 15 14"><path d="M1 12.500h11" stroke="#222"/><path d="M9 1h5v8l-2 3h-1l-2-3z" fill="#222"/></svg>
						${sp(2)}<div class="num" style="width:18px">21</div>
						${sp(2)}
						<div class="btn" style="width:20px;height:13px"><svg width="16" height="9" viewBox="0 0 16 9"><path d="M2 1v7" stroke="#111" stroke-width="1.400"/><path d="M5 1h10v7H5z" fill="#111"/></svg></div>
						${sp(3)}${btn(25, "line", true, 20)}${btn(25, "lineb", false, 20)}${btn(25, "linec", false, 20)}${btn(25, "lined", false, 20)}
						${sp(2)}
						<div class="boxed"><div class="check"></div><span style="margin-left:3px">Zone Boundary</span></div>
					</div>
					<div class="row">
						${sp(2)}${btn(18, "stack")}${sp(1)}
						<div class="btn lines-btn" style="width:81px;height:18px">${icon("eye", 13)}<span class="small">Lines: Detail Lines</span><span class="tip"></span></div>
						${sp(3)}
						<div class="btn lines-btn" style="width:101px;height:18px"><span style="margin-top:-3px;letter-spacing:.25px">AStair_dashed</span><span class="tip"></span><span class="dash"></span></div>
						${sp(3)}
						<div class="cat" style="width:100px;margin-top:-4px">
							<div>Line Category:</div>
							<div class="select"><span>Drafting Line</span><span class="drop"></span></div>
						</div>
						${sp(4)}${btn(19, "arrowoff")}${sp(22)}
						<div class="off-block" style="width:59px">
							<div class="off-row">${icon("arrowoff", 10)}<span style="width:7px"></span><div class="off-num">6.00</div></div>
							<div class="off-row" style="margin-left:19px"><div class="off-num" style="width:20px">61</div><div class="btn" style="width:20px;height:10px"><svg width="14" height="7" viewBox="0 0 14 7"><path d="M1 0h3v7H1z" fill="#9a9788"/><path d="M6 0h7v7H6z" fill="#9a9788"/></svg></div></div>
						</div>
						${sp(1)}
						<div class="boxed"><div class="check"></div><span style="margin-left:3px;width:80px">Uniform Settings for Line Tools</span></div>
					</div>
				</div>
			</div>
		`;
	}

	private viewBar() {
		return html`
			<div class="viewbar">
				<div class="cell" style="width:14px">${icon("trio", 11)}</div>
				<div class="cell" style="width:12px">${icon("mag", 11)}</div>
				<div class="txt" style="width:62px;border-right:1px solid #9a9788">1/2" &nbsp;= &nbsp;1'-0"</div>
				<div class="txt" style="width:46px;border-right:1px solid #9a9788">430 %</div>
				<div class="cell" style="width:14px">▸</div>
				<div class="cell" style="width:15px">${icon("zoomn", 11)}</div>
				${VIEW_ICONS.map((n) => html`<div class="cell" style="width:15px">${icon(n, 11)}</div>`)}
				<div class="cell" style="width:10px">◂</div>
				<div class="hbar"><div class="hthumb"></div><div class="grip"></div></div>
			</div>
		`;
	}

	private coords() {
		const sp = (w: number) => html`<div class="sp" style="width:${w}px"></div>`;
		const btn = (w: number, name: string, on = false) =>
			html`<div class="btn ${on ? "on" : ""}" style="width:${w}px;height:18px">${icon(name)}</div>`;
		return html`
			<div class="coords">
				<div class="crow">
					${sp(10)}${btn(16, "cross")}${sp(4)}${btn(16, "grid2")}${btn(17, "grid3", true)}${btn(18, "grid2")}${sp(3)}
					${btn(16, "plus", true)}${btn(16, "plusgrid")}${btn(16, "plusbox")}${sp(6)}
					<div class="smallb">${icon("tri", 11)}</div>
					<div class="field" style="width:73px"><div>Δx: &nbsp;76'-7/32"</div><div>Δy: &nbsp;2'-10 25/64"</div></div>
					${sp(6)}
					<div class="smallb">${icon("tri", 11)}</div>
					<div class="field" style="width:73px"><div>Δr: &nbsp;76'-7/8"</div><div>&nbsp;a: &nbsp;2.16°</div></div>
					${sp(6)}
					${btn(17, "burst")}${btn(17, "down1")}${btn(17, "down1")}${btn(18, "roof2")}${sp(3)}
					<div class="field off" style="width:70px"><div>Δz: 0"</div><div>to Project Zero</div><span class="tip" style="right:2px;top:8px;border-left-color:#555"></span></div>
				</div>
				<div class="crow">
					${sp(34)}${ROW2A.map((n) => btn(19, n))}${btn(19, "cursor7")}${sp(3)}
					${btn(19, "curve1")}${btn(19, "curve2")}${btn(19, "curve3")}${sp(4)}
					${btn(19, "cogs")}${btn(19, "planbox", true)}${sp(3)}${btn(19, "lensg")}${sp(4)}
					${btn(15, "bigx")}${btn(15, "slope", true)}${btn(15, "xs")}${sp(2)}
					<div class="half">Half<span class="tip"></span></div>
					${sp(7)}
					<div class="btn text-off" style="width:33px;height:18px">OK</div>
					${sp(5)}
					<div class="btn text-off" style="width:33px;height:18px">Cancel</div>
				</div>
			</div>
		`;
	}

	private layerPalette() {
		return html`
			<div class="layers">
				<div class="l-close"><div class="redx"><svg width="5" height="5" viewBox="0 0 5 5"><path d="M.5.5l4 4M4.500.5l-4 4" stroke="#fff"/></svg></div></div>
				<div class="l-big">${icon("eyearrow", 17)}</div>
				<div class="l-big">${icon("lockarrow", 17)}</div>
				<div class="l-group sel">
					<span>&nbsp;Selection's Layer</span>
					<div class="l-cells"><div class="l-cell">${icon("dish", 11)}</div><div class="l-cell">${icon("lockg", 10)}</div><div class="l-cell">${icon("boxd", 10)}</div></div>
				</div>
				<div class="l-group all">
					<span>&nbsp;All Layer</span>
					<div class="l-cells"><div class="l-cell">${icon("dishd", 11)}</div><div class="l-cell">${icon("lockr", 10)}</div></div>
				</div>
				<div class="l-side">${icon("dropd", 11)}${icon("boxd", 9)}</div>
			</div>
		`;
	}

	private miscPalette() {
		return html`
			<div class="misc">
				<div class="m-title"><span>Miscellaneous</span><div class="redx"><svg width="5" height="5" viewBox="0 0 5 5"><path d="M.5.5l4 4M4.500.5l-4 4" stroke="#fff"/></svg></div></div>
				<div class="m-row1">${icon("misc", 12)}<span class="caret" style="margin-left:1px"></span><span class="m-line"></span></div>
				<div class="m-row2"><span><u>O</u>ptions</span><span class="caret"></span><span style="margin-left:2px">${icon("miscoff", 12)}</span></div>
				<div class="m-row3">${icon("ghostb", 10)}<span>Show Ghost Story</span></div>
			</div>
		`;
	}

	render() {
		return html`
			<div class="behind">
				<div>D</div><div>c</div>
				<div class="well"></div>
				<div>P</div><div></div><div>V</div><div>i</div><div>s</div><div>E</div><div>C</div><div>a</div>
			</div>
			<div class="peek">fr</div>

			<div class="main">
				<div class="title">
					${icon("bars", 11)}<span>Nelson House Kuau - ArchiCAD 9</span><span class="grow"></span><win-buttons></win-buttons>
				</div>
				<div class="menu">${MENUS.map(([m, w]) => html`<span style="width:${w}px">${m}</span>`)}</div>
				<div class="tools">
					${TOOLS.map((t) => (t === "|" ? html`<span class="sep"></span>` : html`<span class="t">${icon(t, 13)}</span>`))}
				</div>
				<div class="body">
					<div class="toolbox">
						<div class="tb-head"><span>?</span><span>×</span></div>
						<div class="tb-list">
							${TOOLBOX.map((t) => html`<div class="tb-item ${t === "polyline" ? "on" : ""}">${icon(t, 14)}</div>`)}
						</div>
					</div>
					<div class="right">
						${this.infoBox()}
						<div class="doc">
							<div class="doc-title">
								${icon("page", 10)}<span>A &nbsp;/ Autorebuild Model</span><span class="grow"></span><win-buttons></win-buttons>
							</div>
							<div class="doc-main">
								<svg class="canvas" width="757" height="409" viewBox="35 147 757 409">${this.drawing()}</svg>
								<div class="vbar"><div class="arrow up"></div><div class="thumb"></div><div class="vfill"></div><div class="arrow dn"></div></div>
							</div>
							${this.viewBar()}
						</div>
					</div>
				</div>
				${this.coords()}
				<div class="status">
					<span>Enter First Node of PolyLine.</span><span class="fill"></span>
					<span class="m">${icon("disk", 11)}<span>C: 59.6 GB</span></span>
					<span class="m" style="margin:0 33px 0 16px">${icon("chip", 10)}<span>1.41 GB</span></span>
				</div>
			</div>

			${this.layerPalette()}
			${this.miscPalette()}

			<div class="dialog">
				<div class="d-title">${icon("bars", 10)}<span>Warning!</span><span class="grow"></span>
					<div class="d-close"><svg width="9" height="9" viewBox="0 0 9 9"><path d="M1 1l7 7M8 1L1 8" stroke="#fff" stroke-width="1.600"/></svg></div>
				</div>
				<div class="d-body">
					<div class="d-icon">${icon("warn", 21)}</div>
					<div class="d-text">
						<div class="d-l1">Cannot find some Library Parts or Internal Macros.</div>
						<div class="d-l2">These will not be included in the Archive.</div>
						<div class="d-btns"><div class="d-btn save">Save Anyway</div><div class="d-btn cancel">Cancel</div></div>
					</div>
				</div>
			</div>

			<div class="taskbar">
				<div class="start">${icon("flag", 12)}<span>start</span></div>
				<div class="quick">${QUICK.map((q) => html`<span class="q">${icon(q, 12)}</span>`)}</div>
				<div class="task">${icon("outlook", 11)}<span>Inbox - Microsoft Out...</span></div>
				<div class="task">${icon("sat", 11)}<span>Contacts - Microsoft ...</span></div>
				<div class="task on">${icon("bars", 11)}<span>Nelson House Kuau - ...</span></div>
				<div class="tray">
					${icon("sat", 11)}${icon("sync", 11)}<div class="ti40">40</div><div class="tim">M</div><span>1:45 PM</span>
				</div>
			</div>
		`;
	}
}
